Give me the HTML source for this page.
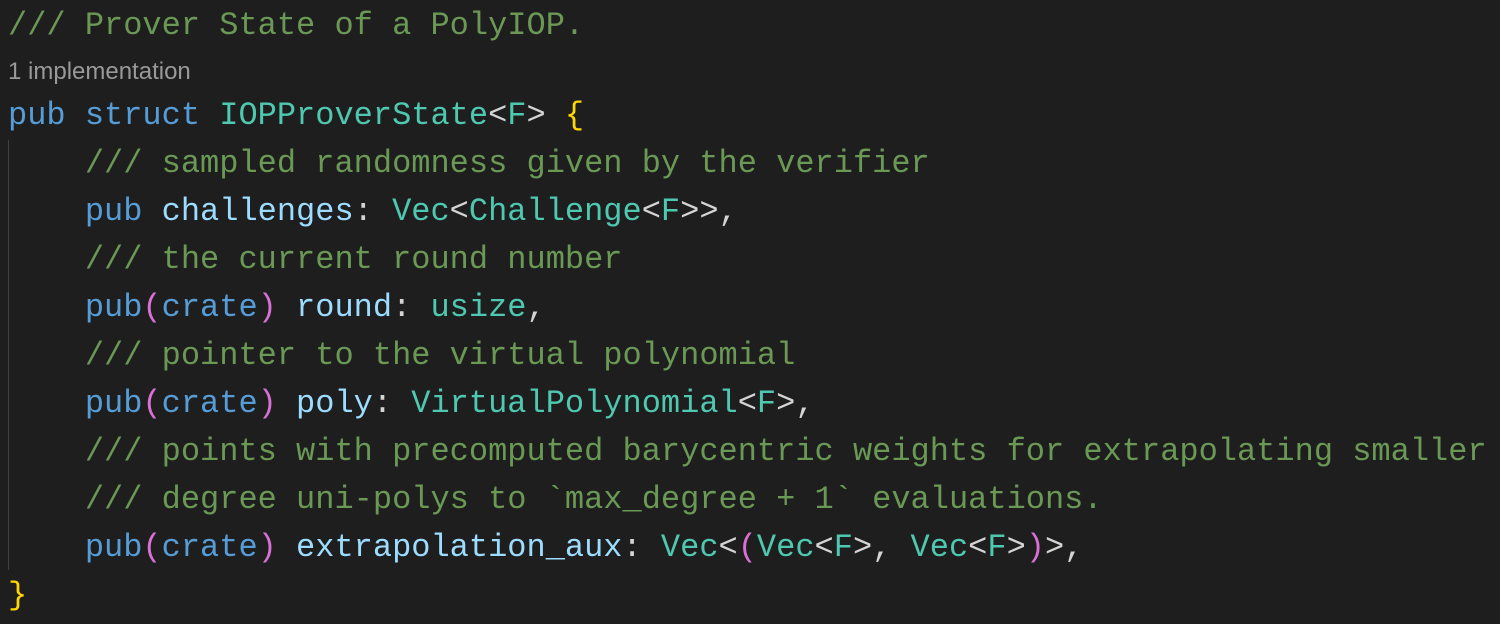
<!DOCTYPE html>
<html><head><meta charset="utf-8"><style>
html,body{margin:0;padding:0;background:#1e1e1e;width:1500px;height:624px;overflow:hidden}
.c{position:absolute;left:8px;top:2px;font-family:"Liberation Mono",monospace;font-size:32px;color:#d4d4d4}
.l{height:48px;line-height:48px;white-space:pre}
.lens{height:42px;line-height:44px;font-family:"Liberation Sans",sans-serif;font-size:24px;color:#999;white-space:pre}
.cm{color:#6a9955}.k{color:#569cd6}.t{color:#4ec9b0}.v{color:#9cdcfe}.y{color:#ffd700}.p{color:#da70d6}
.g{position:absolute;left:8px;top:140px;width:1px;height:430px;background:#404040}
</style></head><body>
<div class="g"></div>
<div class="c"><div class="l cm">/// Prover State of a PolyIOP.</div><div class="lens">1 implementation</div><div class="l"><span class="k">pub</span> <span class="k">struct</span> <span class="t">IOPProverState</span>&lt;<span class="t">F</span>&gt; <span class="y">{</span></div><div class="l">    <span class="cm">/// sampled randomness given by the verifier</span></div><div class="l">    <span class="k">pub</span> <span class="v">challenges</span>: <span class="t">Vec</span>&lt;<span class="t">Challenge</span>&lt;<span class="t">F</span>&gt;&gt;,</div><div class="l">    <span class="cm">/// the current round number</span></div><div class="l">    <span class="k">pub</span><span class="p">(</span><span class="k">crate</span><span class="p">)</span> <span class="v">round</span>: <span class="t">usize</span>,</div><div class="l">    <span class="cm">/// pointer to the virtual polynomial</span></div><div class="l">    <span class="k">pub</span><span class="p">(</span><span class="k">crate</span><span class="p">)</span> <span class="v">poly</span>: <span class="t">VirtualPolynomial</span>&lt;<span class="t">F</span>&gt;,</div><div class="l">    <span class="cm">/// points with precomputed barycentric weights for extrapolating smaller</span></div><div class="l">    <span class="cm">/// degree uni-polys to `max_degree + 1` evaluations.</span></div><div class="l">    <span class="k">pub</span><span class="p">(</span><span class="k">crate</span><span class="p">)</span> <span class="v">extrapolation_aux</span>: <span class="t">Vec</span>&lt;<span class="p">(</span><span class="t">Vec</span>&lt;<span class="t">F</span>&gt;, <span class="t">Vec</span>&lt;<span class="t">F</span>&gt;<span class="p">)</span>&gt;,</div><div class="l"><span class="y">}</span></div></div>
</body></html>
